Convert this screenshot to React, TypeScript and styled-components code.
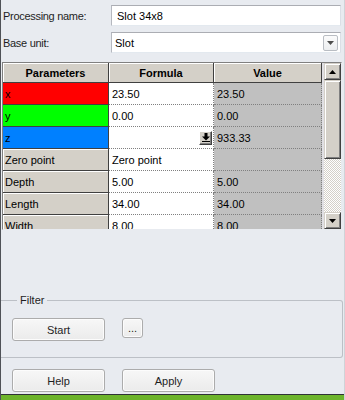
import styled, { createGlobalStyle } from "styled-components";

const GlobalStyle = createGlobalStyle`
  html, body { margin: 0; padding: 0; background: #e8ebf0; }
  body { font-family: "Liberation Sans", Arial, sans-serif; font-size: 11px; color: #000; }
`;

type Param = { name: string; color?: string; formula: string; value: string; pick?: boolean };

const params: Param[] = [
  { name: "x", color: "#ff0000", formula: "23.50", value: "23.50" },
  { name: "y", color: "#00ff00", formula: "0.00", value: "0.00" },
  { name: "z", color: "#0080ff", formula: "", value: "933.33", pick: true },
  { name: "Zero point", formula: "Zero point", value: "" },
  { name: "Depth", formula: "5.00", value: "5.00" },
  { name: "Length", formula: "34.00", value: "34.00" },
  { name: "Width", formula: "8.00", value: "8.00" },
];

export default function App() {
  return (
    <Window>
      <GlobalStyle />
      <FieldRow $top={5}>
        <Label>Processing name:</Label>
        <TextBox>Slot 34x8</TextBox>
      </FieldRow>
      <FieldRow $top={6}>
        <Label>Base unit:</Label>
        <SelectBox>
          <span>Slot</span>
          <DropButton>
            <svg width="7" height="4" viewBox="0 0 7 4">
              <path d="M0 0h7L3.5 4z" fill="#4d4d4d" />
            </svg>
          </DropButton>
        </SelectBox>
      </FieldRow>

      <Table>
        <Columns>
          <HeadCell>Parameters</HeadCell>
          <HeadCell>Formula</HeadCell>
          <HeadCell>Value</HeadCell>
          {params.map((p) => (
            <Row key={p.name}>
              <ParamCell $bg={p.color}>{p.name}</ParamCell>
              <FormulaCell>
                {p.formula}
                {p.pick && (
                  <PickButton>
                    <svg width="8" height="9" viewBox="0 0 8 9">
                      <path d="M2.5 0h3v3.5H8L4 7.5 0 3.5h2.5z M0 8h8v1H0z" fill="#000" />
                    </svg>
                  </PickButton>
                )}
              </FormulaCell>
              <ValueCell>{p.value}</ValueCell>
            </Row>
          ))}
        </Columns>
        <ScrollBar>
          <ScrollButton>
            <svg width="7" height="4" viewBox="0 0 7 4">
              <path d="M3.5 0L7 4H0z" fill="#000" />
            </svg>
          </ScrollButton>
          <Thumb />
          <Track />
          <ScrollButton>
            <svg width="7" height="4" viewBox="0 0 7 4">
              <path d="M0 0h7L3.5 4z" fill="#000" />
            </svg>
          </ScrollButton>
        </ScrollBar>
      </Table>

      <Group>
        <Legend>Filter</Legend>
        <ButtonRow>
          <Button>Start</Button>
          <Button $small>...</Button>
        </ButtonRow>
      </Group>

      <BottomRow>
        <Button>Help</Button>
        <Button>Apply</Button>
      </BottomRow>

      <TaskStrip />
    </Window>
  );
}

const Window = styled.div`
  width: 345px;
  height: 400px;
  box-sizing: border-box;
  border-left: 1px solid #4f5257;
  border-right: 1px solid #cfd3d8;
  background: #e8ebf0;
  display: flex;
  flex-direction: column;
  overflow: hidden;
`;

const FieldRow = styled.div<{ $top: number }>`
  display: grid;
  grid-template-columns: 110px 230px;
  align-items: center;
  margin-top: ${(p) => p.$top}px;
`;

const Label = styled.div`
  padding-left: 2px;
  color: #1e1e1e;
  letter-spacing: -0.3px;
`;

const TextBox = styled.div`
  height: 21px;
  box-sizing: border-box;
  display: flex;
  align-items: center;
  padding-left: 5px;
  background: #fff;
  border: 1px solid;
  border-color: #abadb3 #dbdfe6 #e3e9ef #b5b8bf;
`;

const SelectBox = styled(TextBox)`
  padding-left: 3px;
  padding-right: 2px;
  justify-content: space-between;
`;

const DropButton = styled.div`
  width: 15px;
  height: 16px;
  box-sizing: border-box;
  display: flex;
  align-items: center;
  justify-content: center;
  border: 1px solid #b9bdc3;
  border-radius: 2px;
  background: linear-gradient(#fbfbfb, #eceef0);
`;

const Table = styled.div`
  margin: 9px 0 0 1px;
  width: 340px;
  height: 168px;
  box-sizing: border-box;
  display: flex;
  border: 1px solid;
  border-color: #808080 #e8ebf0 #e8ebf0 #808080;
  overflow: hidden;
`;

const Columns = styled.div`
  display: grid;
  grid-template-columns: 106px 105px 108px;
  grid-auto-rows: 22px;
  grid-template-rows: 20px;
  align-content: start;
  width: 319px;
  flex: none;
`;

const Row = styled.div`
  display: contents;
`;

const HeadCell = styled.div`
  display: flex;
  align-items: center;
  justify-content: center;
  font-weight: bold;
  background: #d4d0c8;
  border-right: 1px solid #404040;
  border-bottom: 1px solid #404040;
  box-shadow: inset 1px 1px 0 #fff;
`;

const ParamCell = styled.div<{ $bg?: string }>`
  display: flex;
  align-items: center;
  padding-left: 2px;
  background: ${(p) => p.$bg ?? "#d4d0c8"};
  border-right: 1px solid #404040;
  border-bottom: 1px solid #404040;
  box-shadow: ${(p) => (p.$bg ? "none" : "inset 1px 1px 0 #fff")};
`;

const FormulaCell = styled.div`
  display: flex;
  align-items: center;
  padding-left: 3px;
  padding-right: 1px;
  background: #fff;
  border-right: 1px dotted #808080;
  border-bottom: 1px dotted #808080;
`;

const ValueCell = styled.div`
  display: flex;
  align-items: center;
  padding-left: 3px;
  background: #c0c0c0;
  border-right: 1px dotted #808080;
  border-bottom: 1px dotted #808080;
`;

const PickButton = styled.div`
  margin-left: auto;
  width: 13px;
  height: 14px;
  box-sizing: border-box;
  display: flex;
  align-items: center;
  justify-content: center;
  background: #d4d0c8;
  border: 1px solid;
  border-color: #fff #404040 #404040 #fff;
  box-shadow: inset -1px -1px 0 #808080;
`;

const ScrollBar = styled.div`
  width: 17px;
  padding-left: 2px;
  display: flex;
  flex-direction: column;
  background: #e0dfe3;
`;

const ScrollButton = styled.div`
  height: 17px;
  flex: none;
  box-sizing: border-box;
  display: flex;
  align-items: center;
  justify-content: center;
  background: #d4d0c8;
  border: 1px solid;
  border-color: #d4d0c8 #404040 #404040 #d4d0c8;
  box-shadow: inset 1px 1px 0 #fff, inset -1px -1px 0 #808080;
`;

const Thumb = styled(ScrollButton)`
  height: 79px;
`;

const Track = styled.div`
  flex: 1;
  background-color: #fff;
  background-image: repeating-conic-gradient(#d4d0c8 0 25%, #fff 0 50%);
  background-size: 2px 2px;
`;

const Group = styled.fieldset`
  margin: 64px 1px 0 0;
  padding: 11px 0 16px 11px;
  border: 1px solid #bcc0c6;
  border-left: none;
  border-radius: 0 3px 3px 0;
  min-width: 0;
`;

const Legend = styled.legend`
  margin-left: 5px;
  padding: 0 3px;
  color: #1e1e1e;
  line-height: 13px;
`;

const ButtonRow = styled.div`
  display: flex;
  align-items: flex-start;
  gap: 17px;
`;

const Button = styled.button<{ $small?: boolean }>`
  width: ${(p) => (p.$small ? "21px" : "93px")};
  height: ${(p) => (p.$small ? "20px" : "23px")};
  padding: 0;
  font-family: "Liberation Sans", Arial, sans-serif;
  font-size: 11px;
  color: #1e1e1e;
  border: 1px solid #acacac;
  border-radius: 3px;
  background: linear-gradient(#f7f7f7, #ebebeb);
  box-shadow: inset 0 0 0 1px #fcfcfc;
`;

const BottomRow = styled.div`
  display: flex;
  gap: 17px;
  margin-top: 11px;
  padding-left: 11px;
`;

const TaskStrip = styled.div`
  margin-top: auto;
  height: 5px;
  flex: none;
  border-top: 1px solid #2f3136;
  background: #6db42c;
`;
